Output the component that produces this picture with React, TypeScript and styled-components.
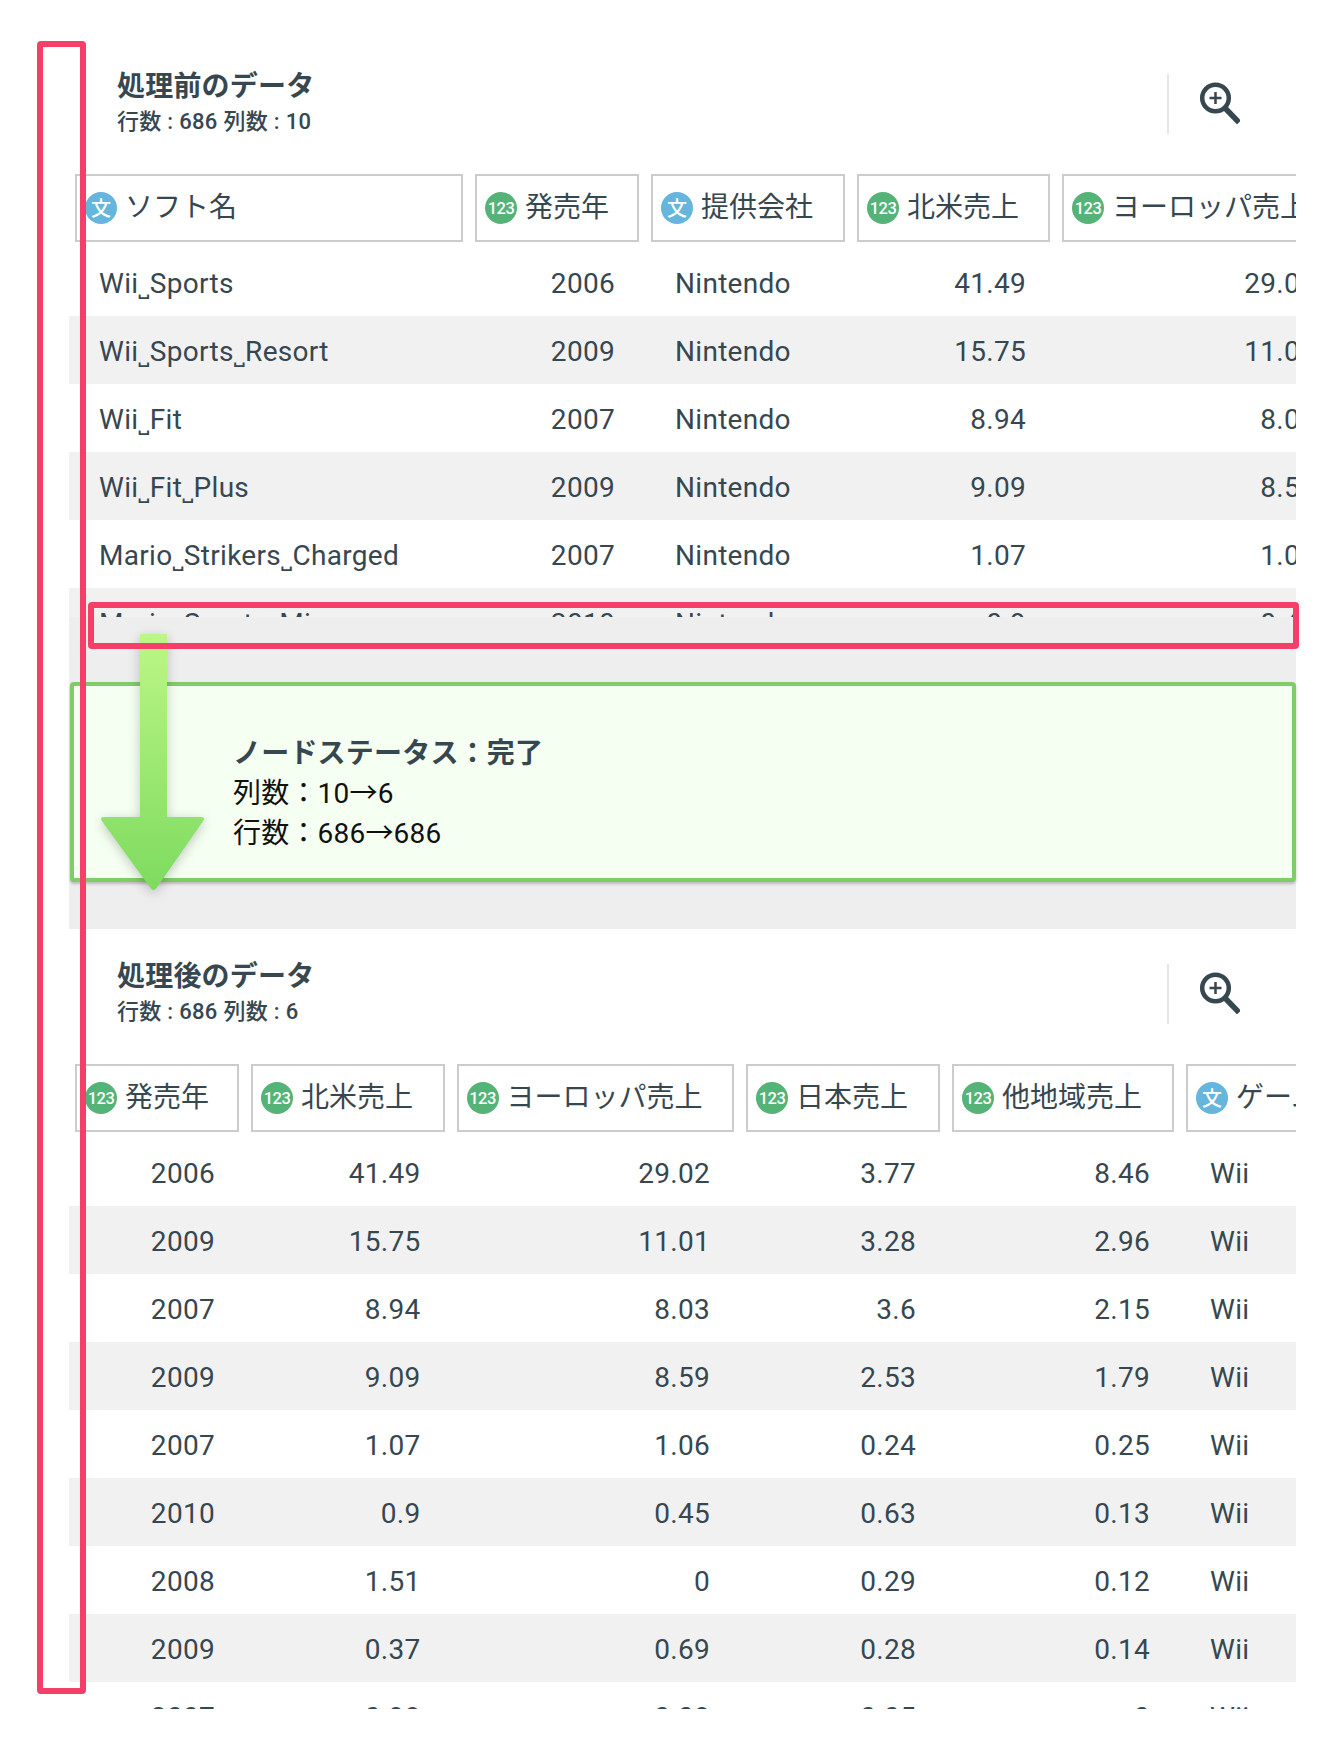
import { createGlobalStyle, styled } from "styled-components";

const ink = "#37474f";
const pink = "#f53e68";

const GlobalStyle = createGlobalStyle`
  html, body {
    margin: 0;
    padding: 0;
    background: #fff;
    color: ${ink};
    font-family: Roboto, "Noto Sans CJK JP", sans-serif;
  }
`;

type Column = { label: string; kind: "num" | "text"; width: number };

const beforeColumns: Column[] = [
  { label: "ソフト名", kind: "text", width: 388 },
  { label: "発売年", kind: "num", width: 164 },
  { label: "提供会社", kind: "text", width: 194 },
  { label: "北米売上", kind: "num", width: 193 },
  { label: "ヨーロッパ売上", kind: "num", width: 278 },
];

const beforeRows = [
  ["Wii˽Sports", "2006", "Nintendo", "41.49", "29.02"],
  ["Wii˽Sports˽Resort", "2009", "Nintendo", "15.75", "11.01"],
  ["Wii˽Fit", "2007", "Nintendo", "8.94", "8.03"],
  ["Wii˽Fit˽Plus", "2009", "Nintendo", "9.09", "8.59"],
  ["Mario˽Strikers˽Charged", "2007", "Nintendo", "1.07", "1.06"],
  ["Mario˽Sports˽Mix", "2010", "Nintendo", "0.9", "0.45"],
];

const afterColumns: Column[] = [
  { label: "発売年", kind: "num", width: 164 },
  { label: "北米売上", kind: "num", width: 193.5 },
  { label: "ヨーロッパ売上", kind: "num", width: 277.5 },
  { label: "日本売上", kind: "num", width: 194 },
  { label: "他地域売上", kind: "num", width: 222 },
  { label: "ゲーム機種", kind: "text", width: 221 },
];

const afterRows = [
  ["2006", "41.49", "29.02", "3.77", "8.46", "Wii"],
  ["2009", "15.75", "11.01", "3.28", "2.96", "Wii"],
  ["2007", "8.94", "8.03", "3.6", "2.15", "Wii"],
  ["2009", "9.09", "8.59", "2.53", "1.79", "Wii"],
  ["2007", "1.07", "1.06", "0.24", "0.25", "Wii"],
  ["2010", "0.9", "0.45", "0.63", "0.13", "Wii"],
  ["2008", "1.51", "0", "0.29", "0.12", "Wii"],
  ["2009", "0.37", "0.69", "0.28", "0.14", "Wii"],
  ["2007", "0.98", "0.08", "0.05", "0", "Wii"],
];

const ZoomIcon = () => (
  <svg width="42" height="42" viewBox="0 0 42 42" fill="none" stroke={ink}>
    <circle cx="17.5" cy="16" r="13.3" strokeWidth="4.5" />
    <path d="M17.5 10v12M11.5 16h12" strokeWidth="2.5" />
    <path d="M26.5 25.5L41 40.5" strokeWidth="5.5" />
  </svg>
);

const DownArrow = () => (
  <ArrowSvg width="130" height="280" viewBox="0 0 130 280">
    <defs>
      <linearGradient id="arrowFill" x1="0" y1="0" x2="0" y2="1">
        <stop offset="0" stopColor="#bcf686" />
        <stop offset="1" stopColor="#7edb60" />
      </linearGradient>
    </defs>
    <path
      d="M52 10H79V193H113Q117 193 115.5 196.5L68.5 264Q65.5 268 62.5 264L13.5 196.5Q12 193 16 193H52Z"
      fill="url(#arrowFill)"
    />
  </ArrowSvg>
);

const DataTable = ({
  columns,
  rows,
  height,
}: {
  columns: Column[];
  rows: string[][];
  height: number;
}) => {
  const template = columns.map((c) => `${c.width}px`).join(" ");
  return (
    <Viewport $height={height}>
      <HeaderRow $template={template}>
        {columns.map((c) => (
          <HeaderCell key={c.label}>
            <Badge $kind={c.kind}>{c.kind === "num" ? "123" : "文"}</Badge>
            <HeaderLabel>{c.label}</HeaderLabel>
          </HeaderCell>
        ))}
      </HeaderRow>
      {rows.map((row, i) => (
        <Row key={i} $template={template} $striped={i % 2 === 1}>
          {row.map((value, j) => (
            <Cell key={j} $right={columns[j].kind === "num"}>
              {value}
            </Cell>
          ))}
        </Row>
      ))}
    </Viewport>
  );
};

const SectionHead = ({ title, meta }: { title: string; meta: string }) => (
  <Head>
    <div>
      <Title>{title}</Title>
      <Meta>{meta}</Meta>
    </div>
    <ToolBox>
      <ZoomIcon />
    </ToolBox>
  </Head>
);

const App = () => {
  return (
    <Page>
      <GlobalStyle />
      <SectionHead title="処理前のデータ" meta="行数 : 686 列数 : 10" />
      <DataTable columns={beforeColumns} rows={beforeRows} height={443} />
      <StatusBand>
        <StatusPanel>
          <StatusTitle>ノードステータス：完了</StatusTitle>
          <StatusLine>列数：10→6</StatusLine>
          <StatusLine>行数：686→686</StatusLine>
        </StatusPanel>
      </StatusBand>
      <SectionHead title="処理後のデータ" meta="行数 : 686 列数 : 6" />
      <DataTable columns={afterColumns} rows={afterRows} height={645} />
      <DownArrow />
      <ColumnMark />
      <RowMark />
    </Page>
  );
};

export default App;

const Page = styled.div`
  position: relative;
  box-sizing: border-box;
  width: 1337px;
  height: 1748px;
  padding: 74px 41px 0 69px;
  overflow: hidden;
`;

const Head = styled.div`
  display: flex;
  justify-content: space-between;
  align-items: flex-start;
  height: 60px;
  padding-left: 48px;
  margin-bottom: 40px;
`;

const Title = styled.div`
  font-size: 28px;
  line-height: 34px;
  font-weight: 700;
  letter-spacing: 0.2px;
  margin-top: -4px;
`;

const Meta = styled.div`
  font-size: 22px;
  line-height: 36px;
  font-weight: 500;
  letter-spacing: 0.3px;
`;

const ToolBox = styled.div`
  display: flex;
  box-sizing: border-box;
  height: 60px;
  padding: 8px 56px 0 29px;
  border-left: 2px solid #e6e6e6;
`;

const Viewport = styled.div<{ $height: number }>`
  height: ${(p) => p.$height}px;
  overflow: hidden;
`;

const HeaderRow = styled.div<{ $template: string }>`
  display: grid;
  grid-template-columns: ${(p) => p.$template};
  column-gap: 12px;
  height: 68px;
  padding-left: 6px;
  margin-bottom: 6px;
`;

const HeaderCell = styled.div`
  display: flex;
  align-items: center;
  box-sizing: border-box;
  gap: 8px;
  padding-left: 8px;
  border: 2px solid #cccccc;
  background: #fff;
  overflow: hidden;
`;

const Badge = styled.span<{ $kind: "num" | "text" }>`
  display: inline-flex;
  flex: none;
  align-items: center;
  justify-content: center;
  box-sizing: border-box;
  width: 32px;
  height: 32px;
  border-radius: 50%;
  color: #fff;
  font-weight: 500;
  background: ${(p) => (p.$kind === "num" ? "#55b378" : "#66b5dd")};
  font-size: ${(p) => (p.$kind === "num" ? "16.5px" : "20px")};
  letter-spacing: ${(p) => (p.$kind === "num" ? "-0.6px" : "0")};
  padding-bottom: ${(p) => (p.$kind === "num" ? "0" : "2px")};
`;

const HeaderLabel = styled.span`
  font-size: 28px;
  line-height: 40px;
  white-space: nowrap;
`;

const Row = styled.div<{ $template: string; $striped: boolean }>`
  display: grid;
  grid-template-columns: ${(p) => p.$template};
  column-gap: 12px;
  align-items: center;
  height: 68px;
  padding-left: 6px;
  background: ${(p) => (p.$striped ? "#f1f1f2" : "#fff")};
`;

const Cell = styled.div<{ $right: boolean }>`
  padding: 2px 24px 0;
  font-size: 28px;
  letter-spacing: 0.3px;
  white-space: nowrap;
  text-align: ${(p) => (p.$right ? "right" : "left")};
  font-family: Roboto, "DejaVu Sans", "Noto Sans CJK JP", sans-serif;
`;

const StatusBand = styled.div`
  box-sizing: border-box;
  height: 312px;
  padding: 65px 0 47px 1px;
  margin-bottom: 35px;
  background: #eeeeef;
`;

const StatusPanel = styled.div`
  box-sizing: border-box;
  display: flex;
  flex-direction: column;
  justify-content: center;
  height: 200px;
  padding: 24px 0 0 159px;
  background: #f5fff2;
  border: 4px solid #80cc68;
  border-radius: 4px;
  box-shadow: 0 2px 3px rgba(0, 0, 0, 0.22);
`;

const StatusTitle = styled.div`
  font-size: 28px;
  line-height: 40px;
  font-weight: 700;
  letter-spacing: 0.2px;
`;

const StatusLine = styled.div`
  font-size: 28px;
  line-height: 40px;
  color: #111;
  letter-spacing: 0.2px;
`;

const ArrowSvg = styled.svg`
  position: absolute;
  left: 88px;
  top: 624px;
  filter: drop-shadow(0 3px 6px rgba(0, 0, 0, 0.22));
`;

const ColumnMark = styled.div`
  position: absolute;
  left: 37px;
  top: 41px;
  box-sizing: border-box;
  width: 49px;
  height: 1653px;
  border: 6px solid ${pink};
  border-radius: 4px;
`;

const RowMark = styled.div`
  position: absolute;
  left: 88px;
  top: 602px;
  box-sizing: border-box;
  width: 1211px;
  height: 47px;
  border: 6px solid ${pink};
  border-radius: 4px;
`;
